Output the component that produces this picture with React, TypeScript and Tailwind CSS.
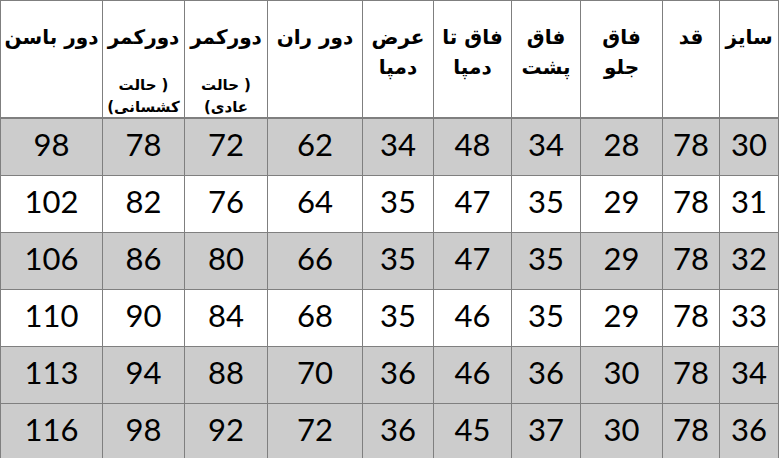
const headers: { lines: string[]; sub?: [string, string] }[] = [
  { lines: ["سایز"] },
  { lines: ["قد"] },
  { lines: ["فاق", "جلو"] },
  { lines: ["فاق", "پشت"] },
  { lines: ["فاق تا", "دمپا"] },
  { lines: ["عرض", "دمپا"] },
  { lines: ["دور ران"] },
  { lines: ["دورکمر"], sub: ["حالت", "عادی"] },
  { lines: ["دورکمر"], sub: ["حالت", "کشسانی"] },
  { lines: ["دور باسن"] },
];

const rows = [
  [30, 78, 28, 34, 48, 34, 62, 72, 78, 98],
  [31, 78, 29, 35, 47, 35, 64, 76, 82, 102],
  [32, 78, 29, 35, 47, 35, 66, 80, 86, 106],
  [33, 78, 29, 35, 46, 35, 68, 84, 90, 110],
  [34, 78, 30, 36, 46, 36, 70, 88, 94, 113],
  [36, 78, 30, 37, 45, 36, 72, 92, 98, 116],
];

const gridCols =
  "grid grid-cols-[58px_56px_81px_68px_77px_70px_94px_82px_81px_101px] gap-px";

export default function App() {
  return (
    <div className="w-[779px] h-[458px] overflow-hidden bg-white">
      <div className="flex flex-col gap-px bg-[#7f7f7f] p-px">
        {/* header */}
        <div dir="rtl" className={`${gridCols} mb-px`}>
          {headers.map((h, i) => (
            <div
              key={i}
              className="h-[116px] bg-white flex flex-col items-center pt-[21px] text-black font-bold text-[20px] leading-[30px] font-['DejaVu_Sans',sans-serif]"
            >
              {h.lines.map((l, j) => (
                <div key={j} dir="rtl">
                  {l}
                </div>
              ))}
              {h.sub && (
                <div className="mt-[22px] flex flex-col items-center text-[15px] leading-[22px]">
                  {/* parens kept as separate items so they sit where the picture has them */}
                  <div dir="ltr" className="flex gap-[5px]">
                    <span dir="rtl">{h.sub[0]}</span>
                    <span>)</span>
                  </div>
                  <div dir="ltr" className="flex">
                    <span>(</span>
                    <span dir="rtl">{h.sub[1]}</span>
                  </div>
                </div>
              )}
            </div>
          ))}
        </div>

        {/* data rows */}
        {rows.map((r, ri) => (
          <div key={ri} dir="rtl" className={gridCols}>
            {r.map((v, ci) => (
              <div
                key={ci}
                className={`h-[56px] flex items-center justify-center pb-[5px] text-[31px] text-black font-['Lato',sans-serif] ${
                  ri % 2 === 0 || ri === 5 ? "bg-[#cccccc]" : "bg-white"
                }`}
              >
                {v}
              </div>
            ))}
          </div>
        ))}
      </div>
    </div>
  );
}
